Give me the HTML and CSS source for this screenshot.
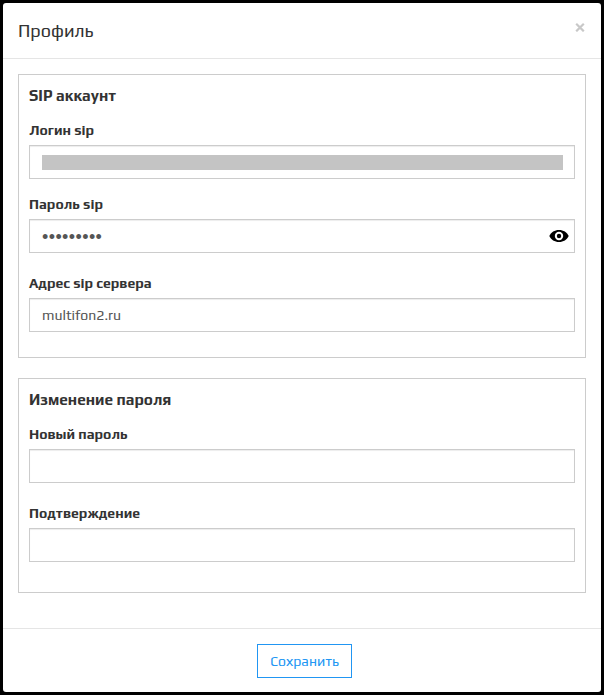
FILE: index.html
```
<!DOCTYPE html>
<html lang="ru">
<head>
<meta charset="utf-8">
<title>Профиль</title>
<link rel="stylesheet" href="styles.css">
</head>
<body>
<form class="modal">
  <header class="modal-header">
    <h1 class="modal-title">Профиль</h1>
    <button class="close" type="button" aria-label="Закрыть">
      <svg width="10" height="10" viewBox="0 0 10 10"><path d="M1.200 1.700l7.600 7.600M8.800 1.700L1.200 9.300" stroke="#c8c8c8" stroke-width="2.200" fill="none"/></svg>
    </button>
  </header>
  <main class="modal-body">
    <section class="panel">
      <h2 class="panel-title">SIP аккаунт</h2>
      <div class="field field-tight">
        <label>Логин sip</label>
        <div class="control"><span class="redacted"></span></div>
      </div>
      <div class="field">
        <label>Пароль sip</label>
        <div class="control has-icon">
          <span class="dots">•••••••••</span>
          <svg class="eye" width="20" height="14" viewBox="0 0 20 14"><path d="M.3 7C2 3.2 5.600 1 10 1s8 2.200 9.700 6c-1.700 3.800-5.300 6-9.700 6S2 10.800.3 7z"/><circle cx="10" cy="7" r="4.200" fill="#fff"/><circle cx="10" cy="7" r="2.200"/></svg>
        </div>
      </div>
      <div class="field">
        <label>Адрес sip сервера</label>
        <div class="control"><span class="value">multifon2.ru</span></div>
      </div>
    </section>
    <section class="panel panel-password">
      <h2 class="panel-title">Изменение пароля</h2>
      <div class="field">
        <label>Новый пароль</label>
        <div class="control"></div>
      </div>
      <div class="field">
        <label>Подтверждение</label>
        <div class="control"></div>
      </div>
    </section>
  </main>
  <footer class="modal-footer">
    <button class="save" type="button">Сохранить</button>
  </footer>
</form>
</body>
</html>
```
FILE: styles.css
```
* { box-sizing: border-box; }
body {
  margin: 0;
  height: 695px;
  padding: 3px;
  background: #000;
  color: #333;
  font: 14px/20px Play, "Open Sans", "Noto Sans", sans-serif;
}
.modal {
  display: flex;
  flex-direction: column;
  width: 598px;
  height: 689px;
  background: #fff;
  border-radius: 3px;
}
.modal-header {
  display: flex;
  justify-content: space-between;
  align-items: flex-start;
  height: 56px;
  padding: 15px 16px 15px 15px;
  border-bottom: 1px solid #e5e5e5;
}
.modal-title {
  margin: 0;
  font-size: 18px;
  line-height: 25px;
  font-weight: 400;
}
.close {
  display: flex;
  margin-top: 4px;
  padding: 0;
  border: 0;
  background: none;
}
.modal-body {
  flex: 1;
  display: flex;
  flex-direction: column;
  gap: 20px;
  padding: 15px;
}
.panel {
  height: 284px;
  padding: 10px;
  border: 1px solid #ccc;
}
.panel-password { height: 215px; }
.panel-title {
  margin: 0 0 13px;
  font-size: 15.4px;
  line-height: 22px;
  font-weight: 600;
  white-space: nowrap;
}
.field { margin-bottom: 20px; }
.field-tight { margin-bottom: 15px; }
label {
  display: block;
  margin-bottom: 5px;
  font-weight: 600;
  white-space: nowrap;
}
.control {
  display: flex;
  align-items: center;
  height: 34px;
  padding: 0 11px 0 12px;
  border: 1px solid #ccc;
  box-shadow: inset 0 1px 1px rgba(0, 0, 0, .075);
  color: #555;
}
.has-icon {
  justify-content: space-between;
  padding-right: 5px;
}
.redacted {
  flex: 1;
  height: 15px;
  background: #c4c4c4;
}
.dots {
  padding-top: 2px;
  font: 18px/20px "Liberation Sans", sans-serif;
  letter-spacing: .4px;
}
.modal-footer {
  display: flex;
  justify-content: center;
  height: 64px;
  padding: 15px 0 0 5px;
  border-top: 1px solid #e5e5e5;
}
.save {
  width: 95px;
  height: 34px;
  padding: 0;
  border: 1px solid #2196f3;
  background: #fff;
  color: #2196f3;
  font: inherit;
}
```
